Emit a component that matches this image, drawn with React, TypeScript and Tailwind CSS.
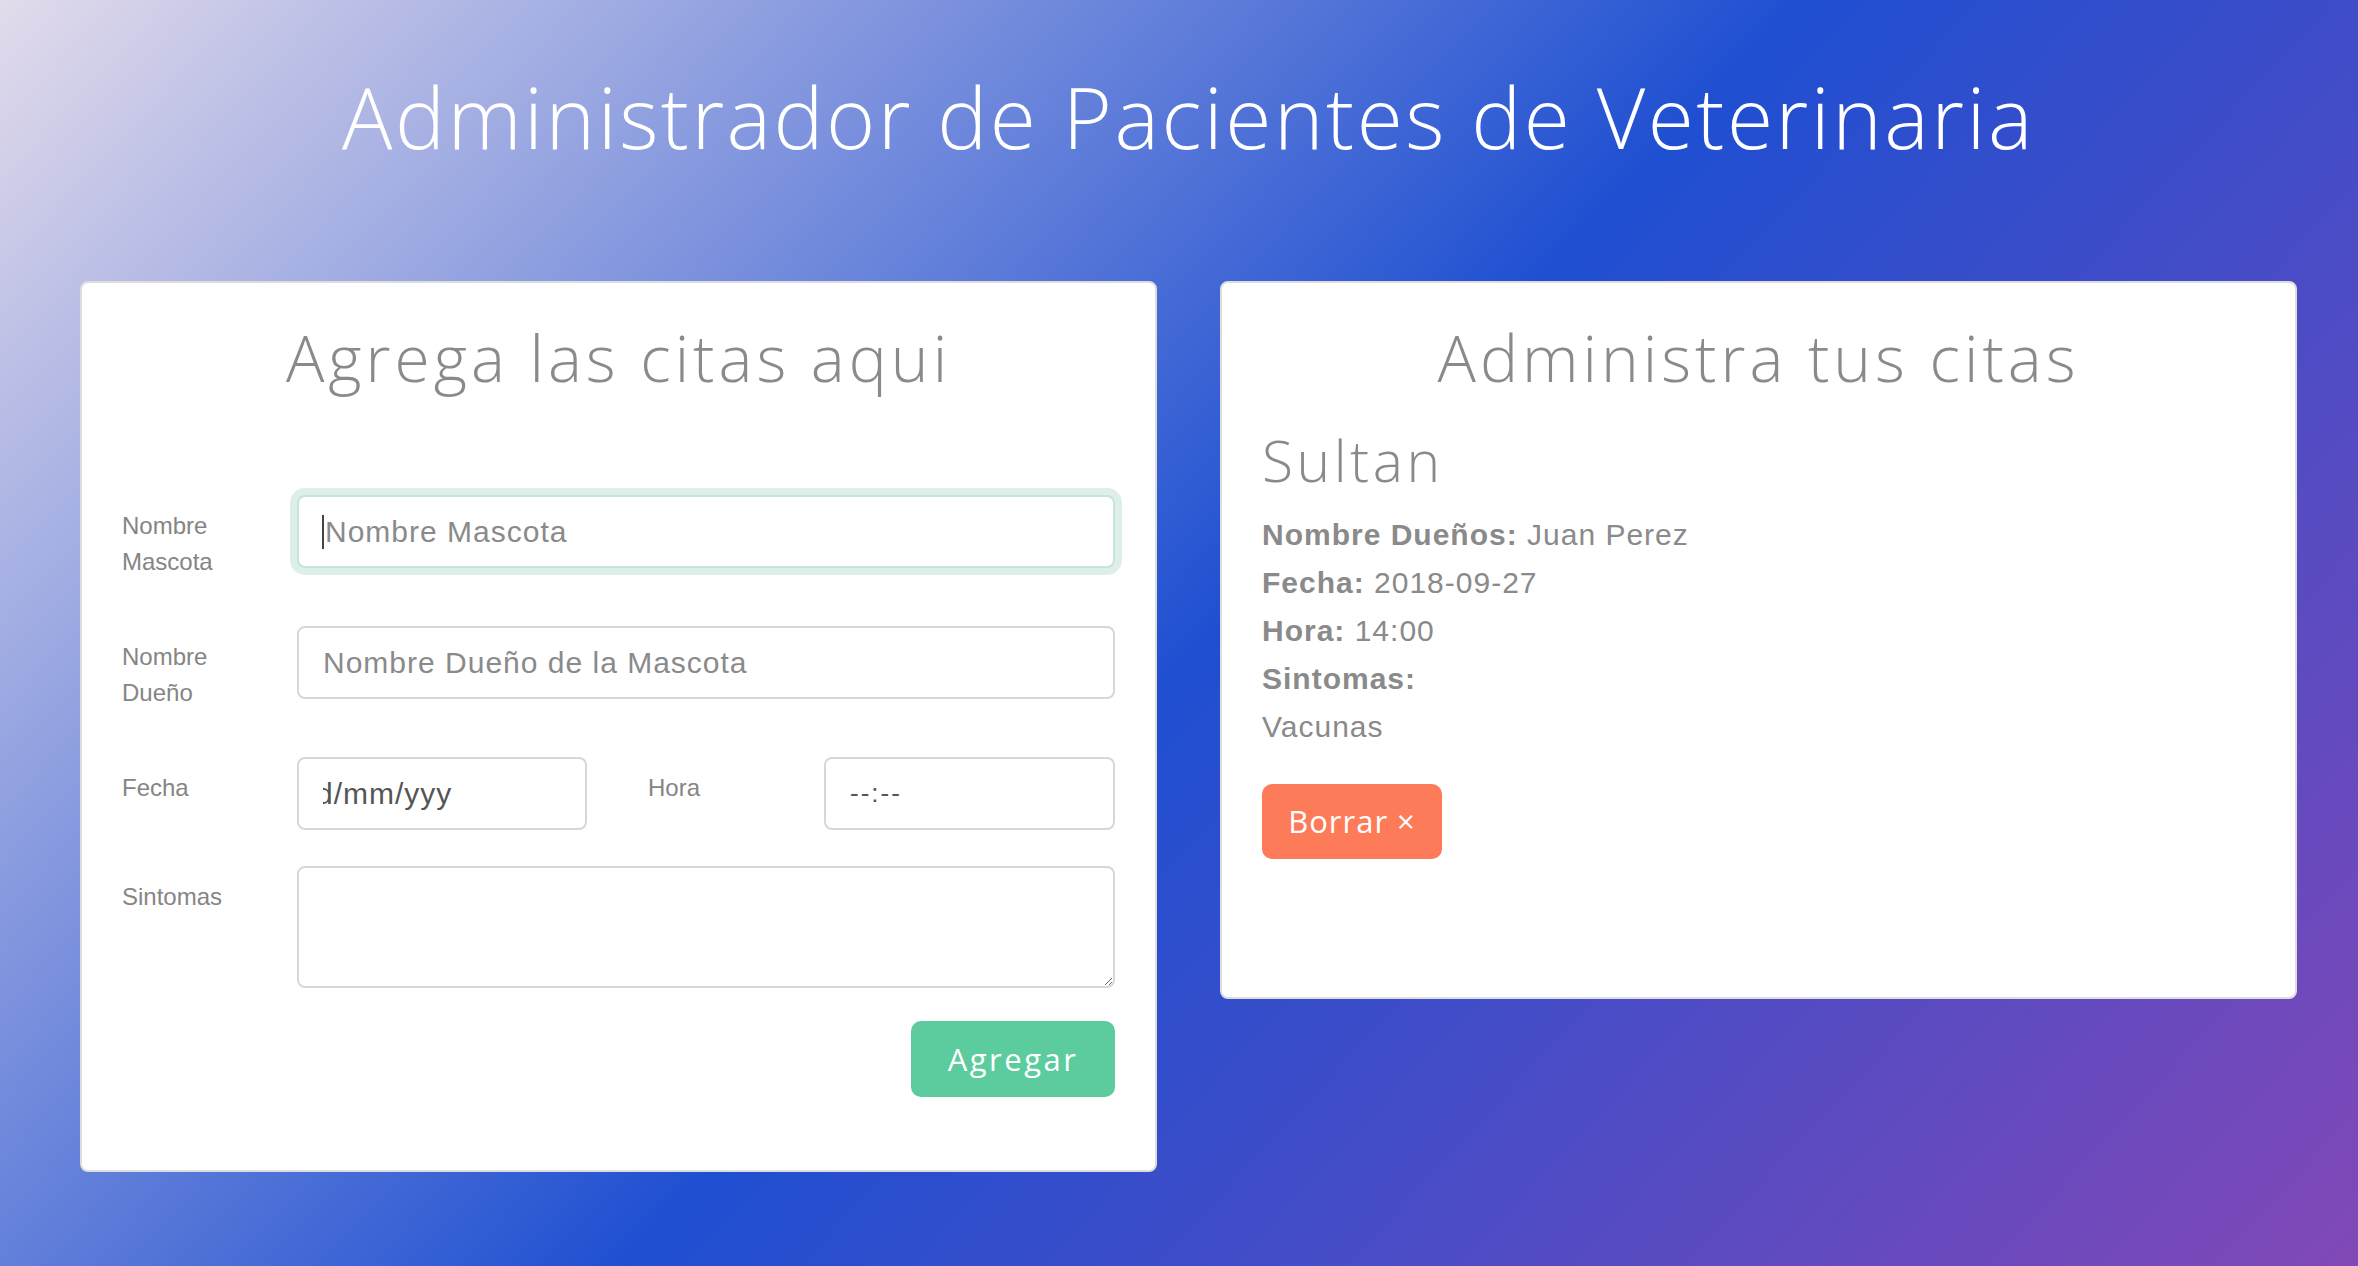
import React from 'react'

const HEAD = "font-['Open_Sans',sans-serif]"
const BODY = "font-['Liberation_Sans',Arial,sans-serif]"

function Label({ children, className = '' }: { children: React.ReactNode; className?: string }) {
  return (
    <div className={`${BODY} text-[24px] leading-[36px] text-[#858585] pt-[13px] pb-[10px] ${className}`}>
      {children}
    </div>
  )
}

function Field({ children, focused = false, className = '' }: { children?: React.ReactNode; focused?: boolean; className?: string }) {
  return (
    <div
      className={`${BODY} h-[73px] rounded-[8px] bg-white flex items-center px-[24px] text-[30px] tracking-[1px] ${
        focused
          ? 'border-2 border-[#c4e6d9] shadow-[0_0_0_7px_#ddefe8]'
          : 'border-2 border-[#d4d8dd]'
      } ${className}`}
    >
      {children}
    </div>
  )
}

export default function App() {
  return (
    <div className="min-h-screen w-full bg-[linear-gradient(133deg,#e2dbeb_0%,#1f4fd1_51%,#8148b7_100%)] pl-[80px] pr-[61px]">
      <h1 className={`${HEAD} font-light text-white text-center text-[84px] leading-[100px] tracking-[2.5px] pt-[67px]`}>
        Administrador de Pacientes de Veterinaria
      </h1>

      <div className="mt-[114px] flex items-start gap-[63px]">
        {/* formulario */}
        <div className="flex-1 bg-white border-2 border-[#dddddd] rounded-[8px] px-[40px] pt-[36px] pb-[73px]">
          <h2 className={`${HEAD} font-light text-[#8a8a8a] text-center text-[64px] leading-[77px] tracking-[4px]`}>
            Agrega las citas aqui
          </h2>

          <div className="mt-[99px]">
            <div className="flex items-start mb-[36px]">
              <Label className="w-[175px] shrink-0">
                Nombre
                <br />
                Mascota
              </Label>
              <Field focused className="flex-1">
                <span className="w-[2px] h-[34px] bg-[#444] -ml-[1px] mr-[1px]" />
                <span className="text-[#8a8a8a]">Nombre Mascota</span>
              </Field>
            </div>

            <div className="flex items-start mb-[36px]">
              <Label className="w-[175px] shrink-0">
                Nombre
                <br />
                Dueño
              </Label>
              <Field className="flex-1">
                <span className="text-[#8a8a8a]">Nombre Dueño de la Mascota</span>
              </Field>
            </div>

            <div className="flex items-start mb-[36px]">
              <Label className="w-[175px] shrink-0">Fecha</Label>
              <Field className="w-[290px] shrink-0">
                <div className="overflow-hidden">
                  <span className="block -ml-[7px] text-[#555]">d/mm/yyy</span>
                </div>
              </Field>
              <Label className="w-[237px] shrink-0 pl-[61px]">Hora</Label>
              <Field className="flex-1">
                <span className="text-[26px] tracking-[2px] text-[#555]">--:--</span>
              </Field>
            </div>

            <div className="flex items-start mb-[33px]">
              <Label className="w-[175px] shrink-0">Sintomas</Label>
              <textarea className="flex-1 h-[122px] rounded-[8px] border-2 border-[#d4d8dd] bg-white outline-none" />
            </div>

            <div className="flex justify-end">
              <button className={`${HEAD} w-[204px] h-[76px] rounded-[10px] bg-[#5ccb9e] text-white text-[31px] tracking-[2.5px]`}>
                Agregar
              </button>
            </div>
          </div>
        </div>

        {/* citas */}
        <div className="flex-1 bg-white border-2 border-[#dddddd] rounded-[8px] px-[40px] pt-[36px] pb-[138px]">
          <h2 className={`${HEAD} font-light text-[#8a8a8a] text-center text-[64px] leading-[77px] tracking-[4px]`}>
            Administra tus citas
          </h2>

          <h3 className={`${HEAD} font-light text-[#8a8a8a] text-[57px] leading-[68px] tracking-[3.5px] mt-[30px]`}>
            Sultan
          </h3>

          <div className={`${BODY} text-[30px] leading-[48px] tracking-[1px] text-[#8a8a8a] mt-[17px]`}>
            <p>
              <span className="font-bold">Nombre Dueños:</span> Juan Perez
            </p>
            <p>
              <span className="font-bold">Fecha:</span> 2018-09-27
            </p>
            <p>
              <span className="font-bold">Hora:</span> 14:00
            </p>
            <p className="font-bold">Sintomas:</p>
            <p>Vacunas</p>
          </div>

          <button className={`${HEAD} mt-[33px] w-[180px] h-[75px] rounded-[10px] bg-[#fe7b5a] text-white text-[31px] tracking-[1px]`}>
            Borrar &times;
          </button>
        </div>
      </div>
    </div>
  )
}
